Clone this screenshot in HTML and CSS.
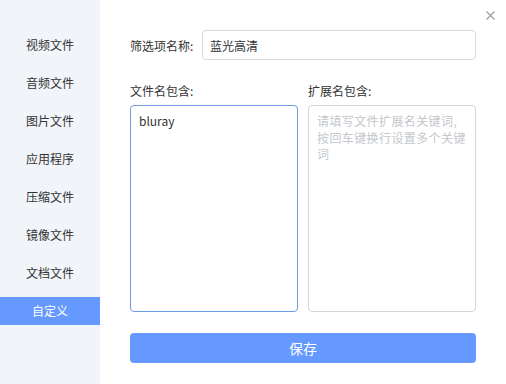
FILE: index.html
```html
<!DOCTYPE html>
<html lang="zh-CN">

<head>
    <meta charset="UTF-8">
    <meta name="viewport" content="width=device-width, initial-scale=1.0">
    <title>自定义筛选</title>
    <link rel="stylesheet" href="styles.css">
</head>

<body>
    <div class="dialog">
        <div class="sidebar">
            <div class="side-item">视频文件</div>
            <div class="side-item">音频文件</div>
            <div class="side-item">图片文件</div>
            <div class="side-item">应用程序</div>
            <div class="side-item">压缩文件</div>
            <div class="side-item">镜像文件</div>
            <div class="side-item">文档文件</div>
            <div class="side-item active">自定义</div>
        </div>

        <div class="main">
            <button class="close-btn" title="关闭">
                <svg width="9" height="9" viewBox="0 0 9 9">
                    <path d="M0.5 0.5 L8.5 8.5 M8.5 0.5 L0.5 8.5" stroke="#9a9a9a" stroke-width="1.1" fill="none"/>
                </svg>
            </button>

            <div class="name-row">
                <label for="filterName">筛选项名称:</label>
                <input type="text" id="filterName" value="蓝光高清">
            </div>

            <div class="columns">
                <div class="col">
                    <div class="col-title">文件名包含:</div>
                    <textarea class="box focused">bluray</textarea>
                </div>
                <div class="col">
                    <div class="col-title">扩展名包含:</div>
                    <textarea class="box ext" placeholder="请填写文件扩展名关键词,按回车键换行设置多个关键词"></textarea>
                </div>
            </div>

            <button class="save-btn">保存</button>
        </div>
    </div>
</body>

</html>
```

FILE: styles.css
```css
* {
    margin: 0;
    padding: 0;
    box-sizing: border-box;
}

body {
    font-family: 'Noto Sans CJK SC', 'Liberation Sans', sans-serif;
    font-size: 12px;
    color: #333;
    background-color: #ffffff;
    width: 506px;
    height: 384px;
    overflow: hidden;
}

.dialog {
    display: flex;
    height: 384px;
}

.sidebar {
    width: 100px;
    background-color: #f1f4f9;
    padding-top: 31px;
    display: flex;
    flex-direction: column;
    gap: 10px;
}

.side-item {
    height: 28px;
    line-height: 28px;
    text-align: center;
    color: #333;
}

.side-item.active {
    background-color: #6699ff;
    color: #ffffff;
}

.main {
    flex: 1;
    position: relative;
    padding: 30px 30px 0 30px;
}

.close-btn {
    position: absolute;
    top: 10px;
    right: 10px;
    width: 11px;
    height: 11px;
    border: none;
    background: none;
    display: flex;
    align-items: center;
    justify-content: center;
}

.name-row {
    display: flex;
    align-items: center;
    height: 30px;
}

.name-row label {
    width: 72px;
}

.name-row input {
    flex: 1;
    height: 30px;
    border: 1px solid #d9d9d9;
    border-radius: 4px;
    padding: 0 7px;
    font-family: inherit;
    font-size: 12px;
    color: #333;
    outline: none;
}

.columns {
    display: grid;
    grid-template-columns: 1fr 1fr;
    gap: 10px;
    margin-top: 23px;
}

.col-title {
    line-height: 16px;
    margin-bottom: 6px;
}

.box {
    display: block;
    width: 100%;
    height: 207px;
    border: 1px solid #d6d6d6;
    border-radius: 4px;
    padding: 7px 8px;
    font-family: inherit;
    font-size: 12px;
    line-height: 16.5px;
    color: #333;
    resize: none;
    outline: none;
}

.box.focused {
    border-color: #6f9ae0;
}

.box.ext {
    letter-spacing: 0.4px;
}

.box::placeholder {
    color: #c4c7cc;
}

.save-btn {
    display: block;
    width: 100%;
    height: 30px;
    margin-top: 21px;
    border: none;
    border-radius: 4px;
    background-color: #6699ff;
    color: #ffffff;
    font-family: inherit;
    font-size: 14px;
}
```
